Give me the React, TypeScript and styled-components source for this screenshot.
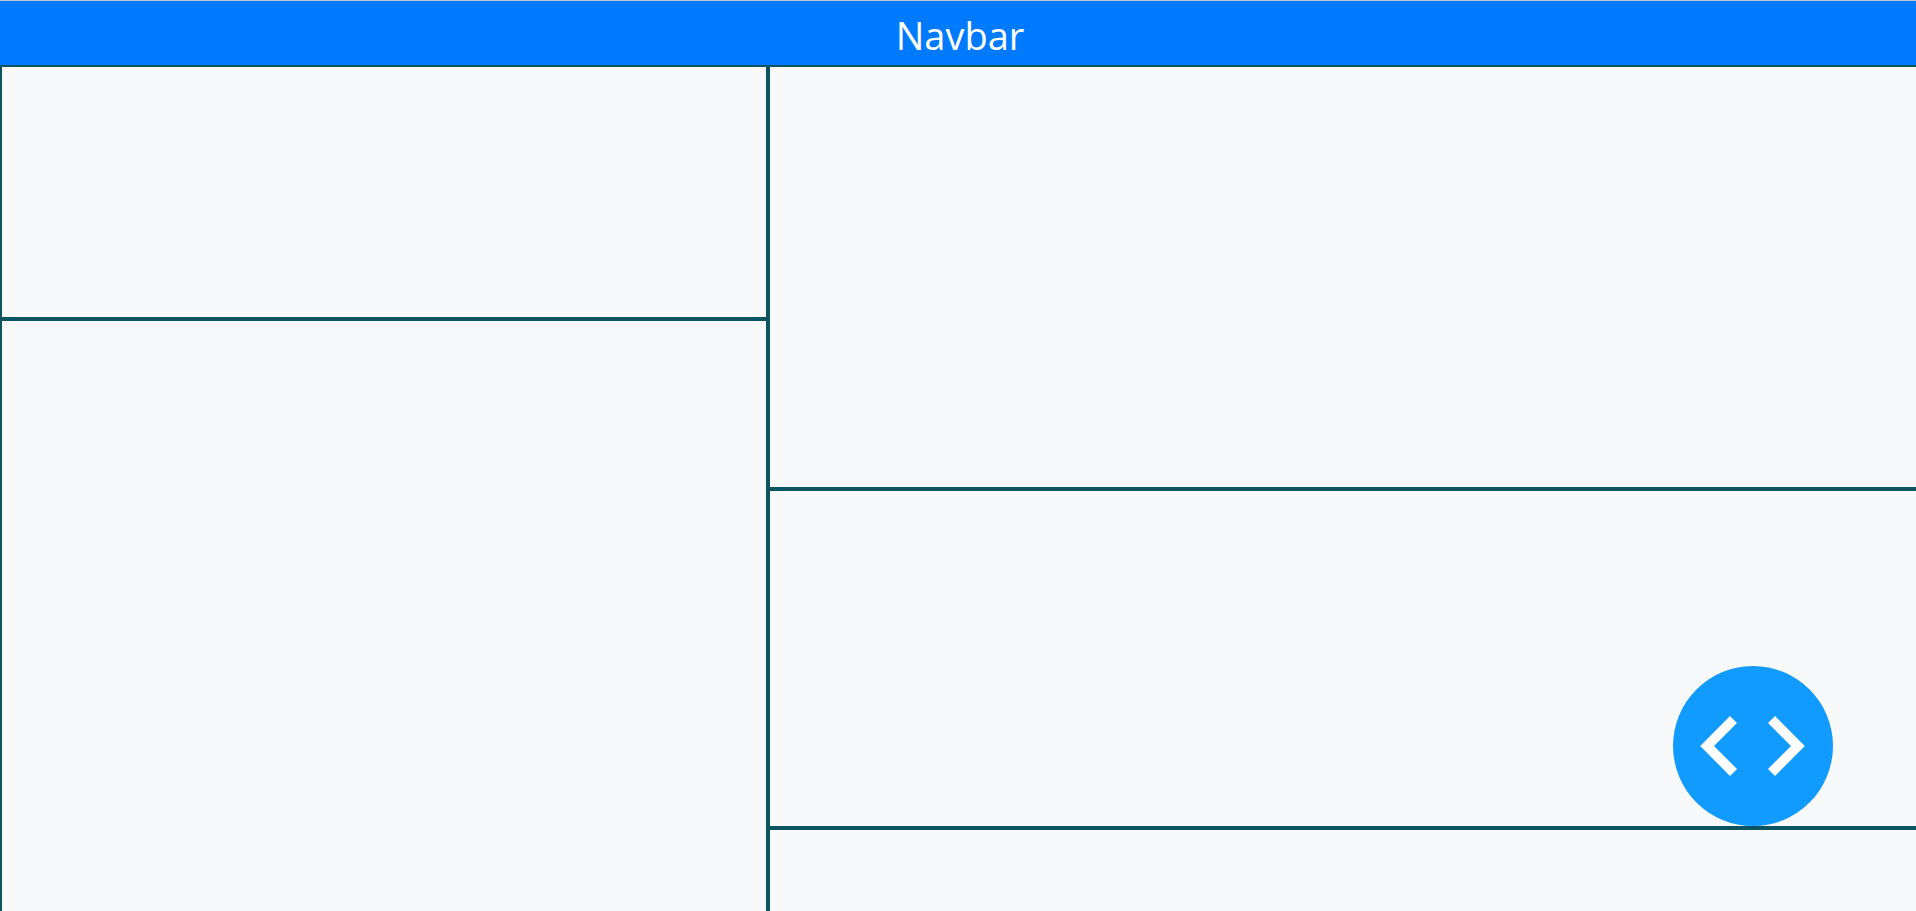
import React from "react";
import styled, { createGlobalStyle } from "styled-components";

const GlobalStyle = createGlobalStyle`
  * {
    box-sizing: border-box;
  }
  body {
    margin: 0;
    background: #f8f9fb;
    font-family: "Segoe UI", "Open Sans", "Noto Sans", sans-serif;
  }
`;

const Page = styled.div`
  display: flex;
  flex-direction: column;
  height: 100vh;
  overflow: hidden;
  border-top: 1px solid #c0c8cf;
`;

const Navbar = styled.header`
  flex: none;
  display: flex;
  align-items: center;
  justify-content: center;
  height: 64px;
  padding: 4px 0 0 4px;
  background: #007bff;
  color: #fff;
`;

const Title = styled.h1`
  margin: 0;
  font-size: 38px;
  font-weight: 400;
  line-height: 60px;
`;

/* The outer border of the right column runs past the window's edge. */
const Layout = styled.main`
  flex: none;
  display: flex;
  height: calc(100vh - 63px);
  width: calc(100% + 4px);
`;

const Column = styled.div<{ $width: string }>`
  flex: none;
  display: flex;
  flex-direction: column;
  width: ${({ $width }) => $width};
`;

const Panel = styled.section<{ $height: string }>`
  flex: none;
  height: ${({ $height }) => $height};
  border: 2px solid #0b5563;
  background: #f8f9fb;
`;

const CodeButton = styled.button`
  position: fixed;
  right: 83px;
  bottom: 85px;
  width: 160px;
  height: 160px;
  padding: 0;
  border: 0;
  border-radius: 50%;
  background: #129bff;
  color: #fff;
  cursor: pointer;

  svg {
    display: block;
  }
`;

export default function App() {
  return (
    <Page>
      <GlobalStyle />
      <Navbar>
        <Title>Navbar</Title>
      </Navbar>
      <Layout>
        <Column $width="40%">
          <Panel $height="30%" />
          <Panel $height="80%" />
        </Column>
        <Column $width="60%">
          <Panel $height="50%" />
          <Panel $height="40%" />
          <Panel $height="30%" />
        </Column>
      </Layout>
      <CodeButton type="button" aria-label="Code">
        <svg width="160" height="160" viewBox="0 0 160 160" fill="currentColor" aria-hidden="true">
          <path d="M27.2 80 57 50l7 7-23 23 23 23-7 7z" />
          <path d="M131.8 80 102 50l-7 7 23 23-23 23 7 7z" />
        </svg>
      </CodeButton>
    </Page>
  );
}
